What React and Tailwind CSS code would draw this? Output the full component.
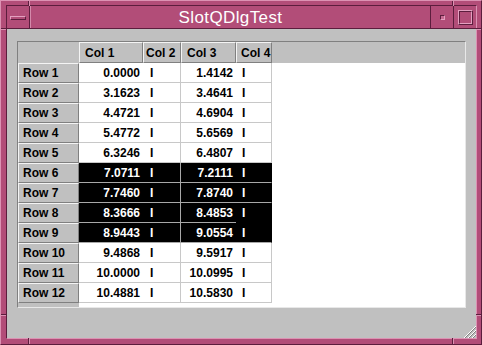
import React from "react";

const DATA = [
  ["Row 1", "0.0000", "1.4142"],
  ["Row 2", "3.1623", "3.4641"],
  ["Row 3", "4.4721", "4.6904"],
  ["Row 4", "5.4772", "5.6569"],
  ["Row 5", "6.3246", "6.4807"],
  ["Row 6", "7.0711", "7.2111"],
  ["Row 7", "7.7460", "7.8740"],
  ["Row 8", "8.3666", "8.4853"],
  ["Row 9", "8.9443", "9.0554"],
  ["Row 10", "9.4868", "9.5917"],
  ["Row 11", "10.0000", "10.0995"],
  ["Row 12", "10.4881", "10.5830"],
];

function Notch({ className }) {
  return <div className={"absolute " + className} />;
}

function Row({ r, i }) {
  const sel = i >= 5 && i <= 8;
  const bg = sel ? "bg-black text-white" : "bg-white text-black";
  const bb = sel ? "border-b-[#a8a8a8]" : "border-b-[#c8c8c8]";
  const last = i === 7 ? "border-b-black" : bb;
  return (
    <div className="flex h-[20px] shrink-0">
      <div className="w-[61px] shrink-0 flex items-center pl-[4px] whitespace-nowrap bg-[#c0c0c0] border-t border-l border-t-[#f4f4f4] border-l-[#f4f4f4] border-b border-r border-b-[#808080] border-r-[#808080]">
        Row {i + 1}
      </div>
      <div className={`w-[64px] shrink-0 flex items-center justify-end pr-[3px] border-b ${bb} ${bg}`}>{r[1]}</div>
      <div className={`w-[38px] shrink-0 flex items-center pl-[7px] border-b border-r ${bb} ${sel ? "border-r-[#a8a8a8]" : "border-r-[#c8c8c8]"} ${bg}`}>I</div>
      <div className={`w-[55px] shrink-0 flex items-center justify-end pr-[3px] border-b ${bb} ${bg}`}>{r[2]}</div>
      <div className={`w-[36px] shrink-0 flex items-center pl-[6px] border-b border-r ${last} ${sel ? "border-r-black" : "border-r-[#c8c8c8]"} ${bg}`}>I</div>
      <div className="flex-1 bg-white" />
    </div>
  );
}

function HeadCell({ w, pl, children }) {
  return (
    <div className={`${w} ${pl} shrink-0 flex items-center whitespace-nowrap overflow-hidden bg-[#c0c0c0] border-t border-l border-t-[#f4f4f4] border-l-[#f4f4f4] border-b border-r border-b-[#808080] border-r-[#808080]`}>
      {children}
    </div>
  );
}

export default function App() {
  return (
    <div className="relative w-[482px] h-[345px] bg-[#b24d78] border border-t-[#dc92b3] border-l-[#dc92b3] border-r-[#5c1d3d] border-b-[#5c1d3d] pt-[4px] pl-[5px] pr-[4px] pb-[5px] flex [font-family:'Liberation_Sans',Arial,sans-serif]">
      {/* frame notches */}
      <Notch className="left-[27px] top-0 w-px h-[5px] bg-[#5c1d3d]" />
      <Notch className="left-[28px] top-0 w-px h-[5px] bg-[#dc92b3]" />
      <Notch className="left-[451px] top-0 w-px h-[5px] bg-[#5c1d3d]" />
      <Notch className="left-[452px] top-0 w-px h-[5px] bg-[#dc92b3]" />
      <Notch className="left-[27px] bottom-0 w-px h-[6px] bg-[#5c1d3d]" />
      <Notch className="left-[28px] bottom-0 w-px h-[6px] bg-[#dc92b3]" />
      <Notch className="left-[451px] bottom-0 w-px h-[6px] bg-[#5c1d3d]" />
      <Notch className="left-[452px] bottom-0 w-px h-[6px] bg-[#dc92b3]" />
      <Notch className="left-0 top-[27px] h-px w-[5px] bg-[#5c1d3d]" />
      <Notch className="left-0 top-[28px] h-px w-[5px] bg-[#dc92b3]" />
      <Notch className="left-0 top-[313px] h-px w-[5px] bg-[#5c1d3d]" />
      <Notch className="left-0 top-[314px] h-px w-[5px] bg-[#dc92b3]" />
      <Notch className="right-0 top-[27px] h-px w-[5px] bg-[#5c1d3d]" />
      <Notch className="right-0 top-[28px] h-px w-[5px] bg-[#dc92b3]" />
      <Notch className="right-0 top-[313px] h-px w-[5px] bg-[#5c1d3d]" />
      <Notch className="right-0 top-[314px] h-px w-[5px] bg-[#dc92b3]" />

      <div className="flex-1 flex flex-col border border-t-[#5c1d3d] border-l-[#5c1d3d] border-r-[#dc92b3] border-b-[#dc92b3]">
        {/* title bar */}
        <div className="h-[23px] flex border-b border-b-[#5c1d3d] shrink-0">
          <div className="w-[23px] border-r border-r-[#5c1d3d] flex items-center justify-center">
            <div className="w-[16px] h-[4px] mt-[1px] bg-[#b24d78] border border-t-[#e4a0c0] border-l-[#e4a0c0] border-b-[#5c1d3d] border-r-[#5c1d3d]" />
          </div>
          <div className="flex-1 border-l border-l-[#d48aab] flex items-center justify-center text-white text-[17px] leading-none tracking-[0.4px]">
            SlotQDlgTest
          </div>
          <div className="w-[23px] border-l border-l-[#5c1d3d] flex items-center justify-center">
            <div className="w-[5px] h-[5px] bg-[#c86a92] border border-t-[#5c1d3d] border-l-[#5c1d3d] border-b-[#e4a0c0] border-r-[#e4a0c0]" />
          </div>
          <div className="w-[23px] border-l border-l-[#5c1d3d] flex items-center justify-center">
            <div className="w-[15px] h-[15px] border border-t-[#e4a0c0] border-l-[#e4a0c0] border-b-[#5c1d3d] border-r-[#5c1d3d]">
              <div className="w-full h-full border border-t-[#5c1d3d] border-l-[#5c1d3d] border-b-[#e4a0c0] border-r-[#e4a0c0]" />
            </div>
          </div>
        </div>

        {/* client area */}
        <div className="flex-1 bg-[#c0c0c0] flex flex-col pl-[10px] pt-[12px]">
          <div className="w-[449px] h-[267px] shrink-0 border border-t-[#808080] border-l-[#808080] border-r-[#e8e8e8] border-b-[#e8e8e8] flex flex-col bg-white text-[12px] font-bold leading-none text-black">
            <div className="flex h-[21px] shrink-0 bg-[#c0c0c0]">
              <div className="w-[61px] shrink-0" />
              <HeadCell w="w-[64px]" pl="pl-[5px]">Col 1</HeadCell>
              <HeadCell w="w-[38px]" pl="pl-[2px]">Col 2</HeadCell>
              <HeadCell w="w-[55px]" pl="pl-[5px]">Col 3</HeadCell>
              <HeadCell w="w-[36px]" pl="pl-[4px]">Col 4</HeadCell>
              <div className="flex-1" />
            </div>
            {DATA.map((r, i) => (
              <Row key={i} r={r} i={i} />
            ))}
            <div className="flex flex-1">
              <div className="w-[61px] bg-[#c0c0c0]" />
              <div className="flex-1 bg-white" />
            </div>
          </div>
          <div className="flex-1 flex items-end justify-end">
            <svg width="13" height="13" viewBox="0 0 13 13" className="block">
              <line x1="13" y1="1" x2="1" y2="13" stroke="#ffffff" strokeWidth="1" />
              <line x1="13" y1="2" x2="2" y2="13" stroke="#808080" strokeWidth="1" />
              <line x1="13" y1="5" x2="5" y2="13" stroke="#ffffff" strokeWidth="1" />
              <line x1="13" y1="6" x2="6" y2="13" stroke="#808080" strokeWidth="1" />
              <line x1="13" y1="9" x2="9" y2="13" stroke="#ffffff" strokeWidth="1" />
              <line x1="13" y1="10" x2="10" y2="13" stroke="#808080" strokeWidth="1" />
            </svg>
          </div>
        </div>
      </div>
    </div>
  );
}
